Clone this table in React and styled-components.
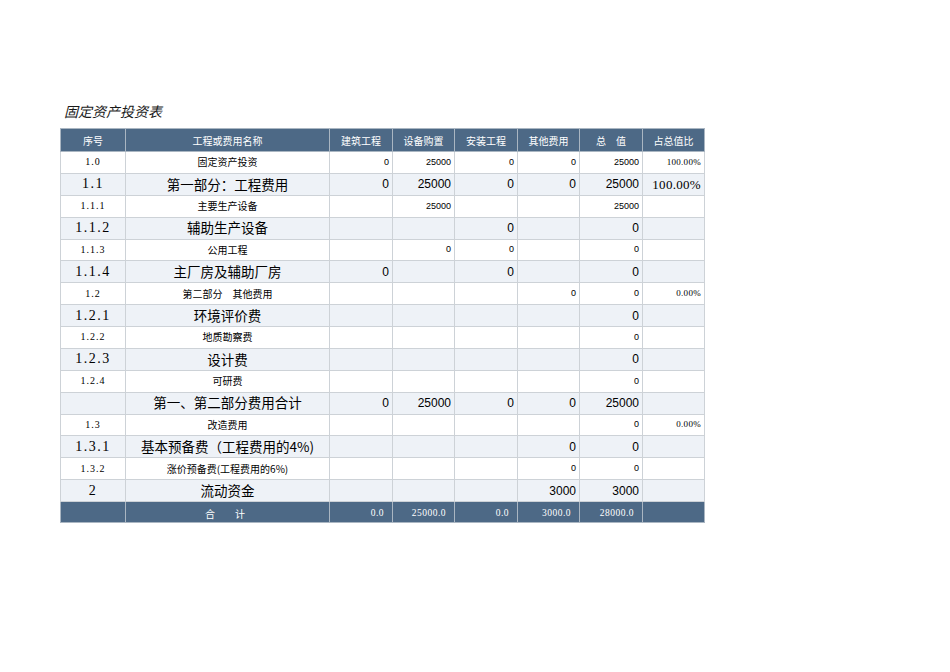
import React from "react";
import styled, { createGlobalStyle } from "styled-components";

const GlobalStyle = createGlobalStyle`
  html, body {
    margin: 0;
    padding: 0;
    background: #ffffff;
  }
  body {
    font-family: "Noto Sans CJK SC", "Noto Sans", sans-serif;
    color: #1a1a1a;
  }
`;

const Page = styled.div`
  padding: 102px 0 0 60px;
`;

const Title = styled.h1`
  margin: 0 0 7px 4px;
  font-size: 14px;
  font-weight: 400;
  font-style: italic;
  line-height: 19px;
  color: #1a1a1a;
  font-family: "Noto Sans CJK SC", sans-serif;
`;

const Table = styled.table`
  border-collapse: collapse;
  table-layout: fixed;
  width: 644px;
`;

const Head = styled.th`
  background: #4d6986;
  color: #ffffff;
  font-weight: 400;
  font-size: 10px;
  height: 22px;
  padding: 0;
  border: 1px solid #aab6c2;
  text-align: center;
  white-space: pre;
`;

const Row = styled.tr`
  height: ${(p) => (p.$total ? 21 : p.$shade ? 22 : 21.75)}px;
  background: ${(p) => (p.$total ? "#4d6986" : p.$shade ? "#eef2f7" : "#ffffff")};
`;

const fonts = {
  serif: '"Liberation Serif", "Noto Sans CJK SC", serif',
  cjk: '"Noto Sans CJK SC", sans-serif',
  sans: '"Liberation Sans", "Noto Sans CJK SC", sans-serif',
};

const Cell = styled.td`
  padding: ${(p) => (p.$total ? "4px 8px 0 3px" : "0 3px")};
  border: 1px solid ${(p) => (p.$total ? "#aab6c2" : "#cdd2d7")};
  text-align: ${(p) => p.$align || "right"};
  white-space: pre;
  overflow: hidden;
  color: ${(p) => (p.$total ? "#ffffff" : "#000000")};
  font-family: ${(p) => fonts[p.$font || "sans"]};
  font-size: ${(p) => p.$size}px;
  letter-spacing: ${(p) => p.$ls || 0}px;
  line-height: 1;
`;

const cols = [65, 204, 63, 62, 63, 62, 63, 62];
const heads = ["序号", "工程或费用名称", "建筑工程", "设备购置", "安装工程", "其他费用", "总　值", "占总值比"];

const rows = [
  { no: "1.0", name: "固定资产投资", v: ["0", "25000", "0", "0", "25000", "100.00%"] },
  { no: "1.1", name: "第一部分：工程费用", v: ["0", "25000", "0", "0", "25000", "100.00%"], big: true },
  { no: "1.1.1", name: "主要生产设备", v: ["", "25000", "", "", "25000", ""] },
  { no: "1.1.2", name: "辅助生产设备", v: ["", "", "0", "", "0", ""], big: true },
  { no: "1.1.3", name: "公用工程", v: ["", "0", "0", "", "0", ""] },
  { no: "1.1.4", name: "主厂房及辅助厂房", v: ["0", "", "0", "", "0", ""], big: true },
  { no: "1.2", name: "第二部分　其他费用", v: ["", "", "", "0", "0", "0.00%"] },
  { no: "1.2.1", name: "环境评价费", v: ["", "", "", "", "0", ""], big: true },
  { no: "1.2.2", name: "地质勘察费", v: ["", "", "", "", "0", ""] },
  { no: "1.2.3", name: "设计费", v: ["", "", "", "", "0", ""], big: true },
  { no: "1.2.4", name: "可研费", v: ["", "", "", "", "0", ""] },
  { no: "", name: "第一、第二部分费用合计", v: ["0", "25000", "0", "0", "25000", ""], big: true },
  { no: "1.3", name: "改造费用", v: ["", "", "", "", "0", "0.00%"] },
  { no: "1.3.1", name: "基本预备费（工程费用的4%)", v: ["", "", "", "0", "0", ""], big: true },
  { no: "1.3.2", name: "涨价预备费(工程费用的6%)", v: ["", "", "", "0", "0", ""] },
  { no: "2", name: "流动资金", v: ["", "", "", "3000", "3000", ""], big: true },
];

const totals = ["0.0", "25000.0", "0.0", "3000.0", "28000.0", ""];

const App = () => {
  return (
    <Page>
      <GlobalStyle />
      <Title>固定资产投资表</Title>
      <Table>
        <colgroup>
          {cols.map((w, i) => (
            <col key={i} style={{ width: w }} />
          ))}
        </colgroup>
        <thead>
          <tr>
            {heads.map((h) => (
              <Head key={h}>{h}</Head>
            ))}
          </tr>
        </thead>
        <tbody>
          {rows.map((r, i) => (
            <Row key={i} $shade={r.big}>
              <Cell $align="center" $font="serif" $size={r.big ? 14 : 10} $ls={r.big ? 1.5 : 1}>
                {r.no}
              </Cell>
              <Cell $align="center" $font="cjk" $size={r.big ? 13.5 : 10}>
                {r.name}
              </Cell>
              {r.v.map((v, j) =>
                j === 5 ? (
                  <Cell key={j} $font="serif" $size={r.big ? 13 : 9} $ls={0.3}>
                    {v}
                  </Cell>
                ) : (
                  <Cell key={j} $size={r.big ? 12 : 9}>
                    {v}
                  </Cell>
                )
              )}
            </Row>
          ))}
          <Row $total>
            <Cell $total $size={10} />
            <Cell $total $align="center" $font="cjk" $size={10}>
              合　　计
            </Cell>
            {totals.map((v, j) => (
              <Cell key={j} $total $font="serif" $size={9.5} $ls={0.5}>
                {v}
              </Cell>
            ))}
          </Row>
        </tbody>
      </Table>
    </Page>
  );
};

export default App;
